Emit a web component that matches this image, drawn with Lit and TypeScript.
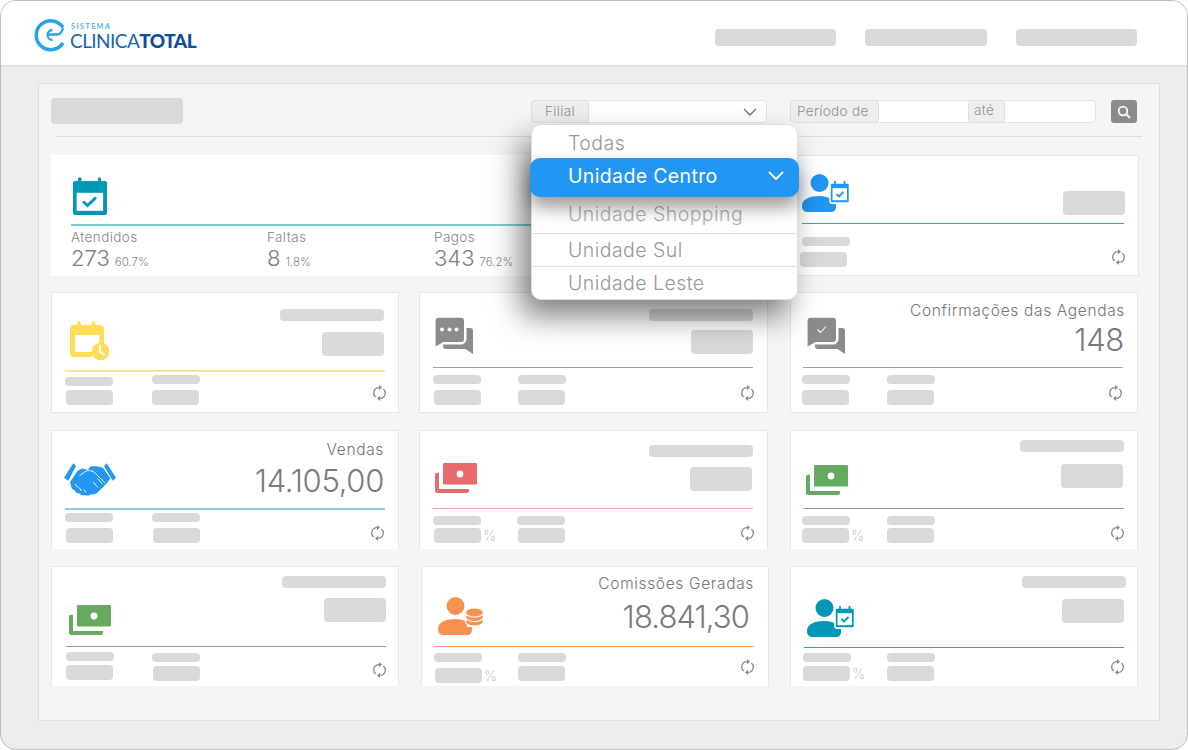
import { LitElement, html, css, svg } from "lit";
import { customElement } from "lit/decorators.js";

const TEAL = "#0097b7", BLUE = "#2196f3", GREEN = "#66a961", RED = "#e96a6c", ORANGE = "#f79250", GREY = "#8d8a8a", YELLOW = "#ffdd57";

const calendarMini = (c: string) => svg`
  <rect x="28" y="9" width="19.5" height="20" rx="1.5" fill="${c}" stroke="#fff" stroke-width="1.6"/>
  <path d="M33 7.6v3M42.500 7.600v3" stroke="${c}" stroke-width="1.800" stroke-linecap="round"/>
  <rect x="30.500" y="14.200" width="14.500" height="12" fill="#fff"/>
  <path d="M34.500 20l2.500 2.500 4.500-4.500" fill="none" stroke="${c}" stroke-width="1.900"/>`;

const person = (c: string) => svg`
  <circle cx="17.500" cy="9" r="9" fill="${c}"/>
  <path d="M0 32c0-7 8-10 17-10 5 0 9 1 12 3v5h5v3c0 3-2 5-5 5H6c-3.500 0-6-2-6-6z" fill="${c}"/>`;

const icons: Record<string, any> = {
  calCheck: html`<svg width="34" height="38" viewBox="0 0 34 38">
    <path d="M6 0.500h1.500a1 1 0 0 1 1 1V4H25V1.500a1 1 0 0 1 1-1h1a1 1 0 0 1 1 1V4h4a2 2 0 0 1 2 2v30a2 2 0 0 1-2 2H2a2 2 0 0 1-2-2V6a2 2 0 0 1 2-2h3V1.500a1 1 0 0 1 1-1z" fill="${TEAL}"/>
    <rect x="3.600" y="15.800" width="26.500" height="18" fill="#fff"/>
    <path d="M10 24.500l4.500 4 8.500-8" fill="none" stroke="${TEAL}" stroke-width="3"/></svg>`,
  calClock: html`<svg width="40" height="40" viewBox="0 0 40 40">
    <path d="M9 0a1.800 1.800 0 0 1 1.800 1.800V4h11V1.800a1.800 1.800 0 0 1 3.600 0V4H30a4 4 0 0 1 4 4v16H29.500V14H5v17h17v5H4a4 4 0 0 1-4-4V8a4 4 0 0 1 4-4h3.200V1.800A1.800 1.800 0 0 1 9 0z" fill="${YELLOW}"/>
    <circle cx="30.500" cy="30.500" r="8.800" fill="${YELLOW}"/>
    <path d="M30 24.500v6.500l4 2.500" fill="none" stroke="#fff" stroke-width="1.800" stroke-linecap="round"/></svg>`,
  chatDots: html`<svg width="38" height="37" viewBox="0 0 38 37">
    <path d="M3.600.700H26a3 3 0 0 1 3 3V22a3 3 0 0 1-3 3H8.500L.6 29.500V3.700a3 3 0 0 1 3-3z" fill="${GREY}"/>
    <path d="M31.500 11H35a3 3 0 0 1 3 3v23l-7.500-5H11a3 3 0 0 1-3-3v-1.500h18a5.500 5.500 0 0 0 5.500-5.500z" fill="${GREY}"/>
    <circle cx="7" cy="12.500" r="2" fill="#fff"/><circle cx="14.500" cy="12.500" r="2" fill="#fff"/><circle cx="21.500" cy="12.500" r="2" fill="#fff"/></svg>`,
  chatCheck: html`<svg width="38" height="37" viewBox="0 0 38 37">
    <path d="M3.600.700H26a3 3 0 0 1 3 3V22a3 3 0 0 1-3 3H8.500L.6 29.500V3.700a3 3 0 0 1 3-3z" fill="${GREY}"/>
    <path d="M31.500 11H35a3 3 0 0 1 3 3v23l-7.500-5H11a3 3 0 0 1-3-3v-1.500h18a5.500 5.500 0 0 0 5.500-5.500z" fill="${GREY}"/>
    <path d="M10.500 12.500l3 3 5.500-6" fill="none" stroke="#fff" stroke-width="1.100"/></svg>`,
  handshake: html`<svg width="52" height="34" viewBox="0 0 52 34">
    <path d="M9.300 1.300L12 4 4.300 18.700 0 15.700z M42.700 1.300L40 4l8.700 14.700L52 15.700z" fill="${BLUE}"/>
    <path d="M13.500 9L18 6.500 24 8l2-3.300c5-.8 9.500-.2 13.300 1.600L46.500 16.500 42 22 33 31c-2 1.500-4.500 1.800-6 .9-1.500 1.800-4.500 2.200-6.500 1-2 .6-4 0-5-1.400-2.200 .2-4-1-4.500-3-2-.4-3.500-2-4-4.500L6 20z" fill="${BLUE}"/>
    <path d="M15.300 14L21 9.500c3-1.300 6-1.300 9 .5L41 21M29 20l5 5.500M33.500 16.500l5 5.500" fill="none" stroke="#fff" stroke-width=".9"/>
    <path d="M11 22l3 3.500M15 25.500l2.500 3.500M20 27.500l2 3" stroke="#fff" stroke-width="1"/></svg>`,
  money: (c: string) => html`<svg width="42" height="30" viewBox="0 0 42 30">
    <path d="M0 11.700a2 2 0 0 1 2-2h2V26h30v2a2 2 0 0 1-2 2H2a2 2 0 0 1-2-2z" fill="${c}"/>
    <rect x="8" y="0" width="34" height="21.500" rx="1.200" fill="${c}"/>
    <circle cx="25" cy="11" r="3.400" fill="#fff"/></svg>`,
  personCal: (c: string) => html`<svg width="48" height="38" viewBox="0 0 48 38">${person(c)}${calendarMini(c)}</svg>`,
  personCoins: html`<svg width="46" height="38" viewBox="0 0 46 38">${person(ORANGE)}
    <g fill="${ORANGE}" stroke="#fff" stroke-width="1.200">
      <ellipse cx="36.500" cy="24.500" rx="9" ry="4.500"/><ellipse cx="36.500" cy="20" rx="9" ry="4.500"/><ellipse cx="36.500" cy="15.500" rx="9" ry="4.500"/>
    </g></svg>`,
};

const refreshIcon = html`<svg class="refresh-svg" width="13" height="16" viewBox="0 0 13 16">
  <path d="M6 2.600A5.300 5.300 0 0 0 2.700 12" fill="none" stroke="#8a8a8a" stroke-width="1.300"/>
  <path d="M6 0l3 2.600-3 2.600z" fill="#8a8a8a"/>
  <path d="M7 13.400A5.300 5.300 0 0 0 10.300 4" fill="none" stroke="#8a8a8a" stroke-width="1.300"/>
  <path d="M7 16l-3-2.600 3-2.600z" fill="#8a8a8a"/></svg>`;

type Foot = number[];
interface Card {
  w: number; h: number; ml?: number; open?: boolean;
  pl: number; ry: number; lw: number; rh: number; rc: string;
  icon: any; il: number; it: number;
  title?: string; tt?: number; tmr?: number;
  value?: string; vt: number; vmr: number; vls?: number;
  col1: Foot; col2?: Foot; c2x?: number; pct?: boolean; rx: number; rfy: number;
}

const cards: Card[] = [
  { w: 348, h: 121, pl: 14, ry: 78, lw: 320, rh: 2, rc: "#ffe58f", icon: icons.calClock, il: 5, it: 29, tt: 17, tmr: 1, vt: 40, vmr: 1, col1: [7, 0, 20, 1], col2: [5, 0, 20, 0], c2x: 87, rx: 314, rfy: 23 },
  { w: 349, h: 121, pl: 14, ry: 75, lw: 320, rh: 1, rc: "#a3a1a1", icon: icons.chatDots, il: 2, it: 25, tt: 17, tmr: 0, vt: 38, vmr: 0, col1: [8, 0, 23, 1], col2: [8, 0, 23, 0], c2x: 85, rx: 314, rfy: 26 },
  { w: 348, h: 121, pl: 13, ry: 75, lw: 320, rh: 1, rc: "#a3a1a1", icon: icons.chatCheck, il: 4, it: 25, title: "Confirmações das Agendas", tt: 9, tmr: -2, value: "148", vt: 28, vmr: -1, col1: [8, -1, 23, -1], col2: [8, 0, 23, 0], c2x: 84, rx: 312, rfy: 26 },
  { w: 348, h: 119, open: true, pl: 14, ry: 78, lw: 320, rh: 2, rc: "#90caf9", icon: icons.handshake, il: -1, it: 32, title: "Vendas", tt: 10, tmr: 1, value: "14.105,00", vt: 31, vmr: 1, col1: [5, 0, 20, 1], col2: [5, 0, 20, 1], c2x: 87, rx: 312, rfy: 25 },
  { w: 349, h: 119, open: true, pl: 14, ry: 78, lw: 320, rh: 1, rc: "#f4a3a3", icon: icons.money(RED), il: 2, it: 33, tt: 15, tmr: 0, vt: 37, vmr: 1, col1: [8, 0, 20, 1], col2: [8, 0, 20, 1], c2x: 84, pct: true, rx: 314, rfy: 25 },
  { w: 348, h: 119, open: true, pl: 13, ry: 78, lw: 321, rh: 1, rc: "#74ae6f", icon: icons.money(GREEN), il: 3, it: 35, tt: 10, tmr: 0, vt: 34, vmr: 1, col1: [8, -1, 20, -1], col2: [8, 0, 20, 0], c2x: 84, pct: true, rx: 314, rfy: 25 },
  { w: 348, h: 120, open: true, pl: 15, ry: 80, lw: 320, rh: 1, rc: "#7db878", icon: icons.money(GREEN), il: 3, it: 39, tt: 10, tmr: 0, vt: 32, vmr: 0, col1: [6, 0, 19, 0], col2: [7, 0, 20, 1], c2x: 86, rx: 313, rfy: 24 },
  { w: 348, h: 120, ml: 2, open: true, pl: 13, ry: 80, lw: 320, rh: 1, rc: "#f9a06a", icon: icons.personCoins, il: 4, it: 31, title: "Comissões Geradas", tt: 8, tmr: 0, value: "18.841,30", vt: 31, vmr: 5, vls: -0.9, col1: [7, 0, 22, 1], col2: [7, 0, 20, 0], c2x: 84, pct: true, rx: 313, rfy: 21 },
  { w: 348, h: 120, open: true, pl: 14, ry: 81, lw: 320, rh: 1, rc: "#1ea6c2", icon: icons.personCal(TEAL), il: 3, it: 33, tt: 10, tmr: -2, vt: 33, vmr: 0, col1: [6, -1, 19, -1], col2: [6, 0, 19, 0], c2x: 83, pct: true, rx: 313, rfy: 20 },
];

const topCard: Card = { w: 351, h: 121, pl: 14, ry: 68, lw: 322, rh: 1, rc: "#4099e8", icon: icons.personCal(BLUE), il: 0, it: 19, vt: 36, vmr: -1, col1: [14, 0, 29, -2], rx: 316, rfy: 34 };

const stats = [
  { label: "Atendidos", n: "273", pct: "60.7%", w: 196 },
  { label: "Faltas", n: "8", pct: "1.8%", w: 167 },
  { label: "Pagos", n: "343", pct: "76.2%", w: 160 },
];

const options = ["Todas", "Unidade Centro", "Unidade Shopping", "Unidade Sul", "Unidade Leste"];

@customElement("app-root")
export class AppRoot extends LitElement {
  static styles = css`
    :host { display: block; height: 750px; overflow: hidden; background: #fff; font-family: "Inter", "Noto Sans", sans-serif; color: #8a8a8a; }
    * { box-sizing: border-box; }
    .window { height: 750px; border: 1px solid #bcbcbc; border-radius: 16px; background: #ededed; overflow: hidden; display: flex; flex-direction: column; }
    header { height: 65px; flex: none; background: #fff; border-bottom: 1px solid #dcdcdc; display: flex; align-items: flex-start; padding: 0 50px 0 32px; box-shadow: 0 1px 1px #e4e4e4; }
    .logo { display: flex; align-items: flex-start; gap: 4px; margin-top: 17px; }
    .logo-text { display: flex; flex-direction: column; font-family: "Lato", sans-serif; margin-top: 5px; }
    .sistema { font-size: 7px; line-height: 7px; font-weight: 700; letter-spacing: 1.55px; color: #4db3ea; margin-left: 1px; }
    .brand { font-size: 19px; line-height: 21px; color: #1665b0; letter-spacing: -.55px; font-weight: 400; white-space: nowrap; }
    .brand b { font-weight: 900; color: #0f4d9c; letter-spacing: -.55px; }
    .nav { margin-left: auto; display: flex; gap: 29px; margin-top: 28px; }
    .nav .skel { width: 121.300px; height: 17px; }
    .skel { background: #dbd8d8; border-radius: 4px; flex: none; }
    .panel { position: relative; margin: 17px 27px 28px 37px; flex: 1; background: #f5f5f5; border: 1px solid #dedede; padding: 14px 17px 0 12px; }
    .toolbar { display: flex; align-items: flex-start; height: 26px; }
    .heading { width: 132px; height: 26px; }
    .group { display: flex; height: 23px; margin-top: 2px; background: #fff; border: 1px solid #e4e4e4; border-radius: 4px; }
    .filial { width: 236px; margin-left: 348px; }
    .periodo { width: 306px; margin-left: 23px; }
    .addon { background: #eee; border: 1px solid #dedede; margin: -1px 0; border-radius: 4px; font-size: 13.500px; letter-spacing: .35px; font-weight: 300; line-height: 21px; padding: 0 7px; color: #8f8f8f; flex: none; height: 23px; white-space: nowrap; }
    .addon.first { margin-left: -1px; }
    .filial .addon { width: 58px; text-align: center; padding: 0; }
    .fill { flex: 1; display: flex; justify-content: flex-end; align-items: center; padding-right: 9px; }
    .periodo .addon.de { width: 89px; padding: 0 6px; }
    .periodo .spacer { width: 89px; }
    .periodo .addon.ate { width: 37px; padding: 0 5px; line-height: 19px; }
    .go { width: 26px; height: 23px; margin: 2px 0 0 15px; background: #8d8a8a; border-radius: 3px; display: flex; align-items: center; justify-content: center; }
    .divider { height: 1px; background: #dcdcdc; margin: 12px 0 0 4px; }
    .top { display: flex; gap: 18px; margin-top: 18px; }
    .big { width: 719px; height: 121px; background: #fff; padding-left: 20px; flex: none; }
    .big .ic { height: 69px; padding: 22px 0 0 2px; }
    .big .ic svg { display: block; }
    .big .rl { height: 2px; background: #7fcbd3; }
    .stats { display: flex; margin-top: 3px; }
    .stat-label { font-size: 13.500px; line-height: 16px; color: #858585; font-weight: 300; letter-spacing: .4px; }
    .stat-row { display: flex; align-items: baseline; gap: 5px; line-height: 26px; }
    .stat-n { font-size: 22px; font-weight: 300; color: #7d7d7d; }
    .stat-p { font-size: 11.500px; font-weight: 300; color: #858585; }
    .grid { display: grid; grid-template-columns: 368px 371px 348px; row-gap: 17px; margin-top: 16px; align-items: start; }
    .card { background: #fff; border: 1px solid #e6e6e6; display: flex; flex-direction: column; }
    .card.open { border-bottom: 0; }
    .head { display: flex; justify-content: space-between; align-items: flex-start; flex: none; }
    .head svg { display: block; }
    .meta { display: flex; flex-direction: column; align-items: flex-end; }
    .title-skel { width: 104px; height: 12px; }
    .title-text { font-size: 15.500px; line-height: 20px; font-weight: 300; letter-spacing: .65px; color: #757575; white-space: nowrap; }
    .value-skel { width: 62px; height: 24px; }
    .value-text { font-size: 31px; line-height: 40px; font-weight: 300; color: #7a7a7a; white-space: nowrap; letter-spacing: -.3px; }
    .foot { position: relative; display: flex; flex: none; }
    .col { width: 48px; flex: none; display: flex; flex-direction: column; }
    .bar1 { width: 48px; height: 9px; }
    .bar2row { display: flex; align-items: flex-end; gap: 2px; }
    .bar2 { width: 47px; height: 15px; }
    .pct { font-size: 14px; line-height: 14px; font-weight: 300; color: #c9c9c9; }
    .refresh { margin-left: auto; flex: none; }
    .refresh-svg { display: block; }
    .menu { position: absolute; left: 492px; top: 40px; width: 267px; height: 176px; background: #fff; border: 1px solid #dedede; border-radius: 10px; box-shadow: -10px 16px 30px rgba(0, 0, 0, .5); display: flex; flex-direction: column; font-size: 19.500px; font-weight: 300; color: #989898; }
    .opt { display: flex; align-items: center; padding-left: 36px; flex: none; white-space: nowrap; letter-spacing: .45px; }
    .opt.o0 { height: 33px; padding-top: 3px; }
    .opt.o1 { height: 39px; margin: 0 -2px; padding: 0 0 4px 38px; background: #2196f3; color: #fff; border-radius: 10px; box-shadow: 0 10px 18px rgba(0, 0, 0, .4); font-weight: 400; letter-spacing: .35px; justify-content: space-between; padding-right: 15px; position: relative; }
    .opt.o2 { height: 37px; border-bottom: 1px solid #dedede; color: #b0b0b0; padding-bottom: 2px; }
    .opt.o3 { height: 33px; border-bottom: 1px solid #dedede; }
    .opt.o4 { height: 32px; }
  `;

  private bar(cls: string, y: number, x: number) {
    return html`<div class="skel ${cls}" style="margin-top:${y}px;margin-left:${x}px"></div>`;
  }

  private col(f: Foot, pct: boolean, extra = "") {
    const gap = f[2] - f[0] - 9;
    return html`<div class="col" style="${extra}">
      ${this.bar("bar1", f[0], f[1])}
      <div class="bar2row" style="margin-top:${gap}px;margin-left:${f[3]}px">
        <div class="skel bar2"></div>${pct ? html`<span class="pct">%</span>` : ""}
      </div>
    </div>`;
  }

  private card(c: Card) {
    const titleH = c.title ? 20 : 12;
    const tt = c.tt ?? 0;
    const hasTitle = c.tt !== undefined;
    const valueMargin = hasTitle ? c.vt - tt - titleH : c.vt;
    const footTop = c.rh;
    return html`<article class="card ${c.open ? "open" : ""}"
      style="width:${c.w}px;height:${c.h}px;margin-left:${c.ml ?? 0}px;padding-left:${c.pl - 1}px">
      <div class="head" style="width:${c.lw}px;height:${c.ry - 1}px">
        <div style="margin:${c.it - 1}px 0 0 ${c.il}px">${c.icon}</div>
        <div class="meta" style="margin-top:${hasTitle ? tt - 1 : c.vt - 1}px">
          ${hasTitle
            ? c.title
              ? html`<div class="title-text" style="margin-right:${c.tmr}px">${c.title}</div>`
              : html`<div class="skel title-skel" style="margin-right:${c.tmr}px"></div>`
            : ""}
          ${c.value
            ? html`<div class="value-text" style="margin-top:${valueMargin}px;margin-right:${c.vmr}px;letter-spacing:${c.vls ?? -0.3}px">${c.value}</div>`
            : html`<div class="skel value-skel" style="margin-top:${hasTitle ? valueMargin : 0}px;margin-right:${c.vmr}px"></div>`}
        </div>
      </div>
      <div style="width:${c.lw}px;height:${c.rh}px;background:${c.rc};flex:none"></div>
      <div class="foot" style="width:${c.lw}px">
        ${this.col(c.col1.map((v, i) => (i % 2 === 0 ? v - footTop : v)), !!c.pct)}
        ${c.col2 ? this.col(c.col2.map((v, i) => (i % 2 === 0 ? v - footTop : v)), false, `margin-left:${(c.c2x ?? 0) - 48}px`) : ""}
        <div class="refresh" style="margin-top:${c.rfy - footTop - 8}px;margin-right:${c.lw - c.rx - 6.5}px">${refreshIcon}</div>
      </div>
    </article>`;
  }

  render() {
    return html`<div class="window">
      <header>
        <div class="logo">
          <svg width="33" height="34" viewBox="0 0 33 34" fill="none" stroke="#27a3e6">
            <path d="M30 9.500A14.500 14.500 0 1 0 30 25" stroke-width="3.500"/>
            <path d="M19.500 12a5 5 0 1 0 0 10" stroke-width="2.300"/>
            <path d="M14 16.500h10c3 0 5-2 6-6.500" stroke-width="2.300"/>
          </svg>
          <div class="logo-text">
            <span class="sistema">SISTEMA</span>
            <span class="brand">CLINICA<b>TOTAL</b></span>
          </div>
        </div>
        <div class="nav"><div class="skel"></div><div class="skel"></div><div class="skel"></div></div>
      </header>
      <section class="panel">
        <div class="toolbar">
          <div class="skel heading"></div>
          <div class="group filial">
            <div class="addon first">Filial</div>
            <div class="fill"><svg width="14" height="8" viewBox="0 0 14 8" fill="none" stroke="#777" stroke-width="1.400"><path d="M1 1l6 6 6-6"/></svg></div>
          </div>
          <div class="group periodo">
            <div class="addon first de">Período de</div>
            <div class="spacer"></div>
            <div class="addon ate">até</div>
          </div>
          <div class="go"><svg width="14" height="14" viewBox="0 0 14 14" fill="none" stroke="#fff" stroke-width="1.800"><circle cx="6" cy="6" r="4.300"/><path d="M9.200 9.200L13 13"/></svg></div>
        </div>
        <div class="divider"></div>
        <div class="top">
          <div class="big">
            <div class="ic">${icons.calCheck}</div>
            <div class="rl"></div>
            <div class="stats">
              ${stats.map((s) => html`<div style="width:${s.w}px">
                <div class="stat-label">${s.label}</div>
                <div class="stat-row"><span class="stat-n">${s.n}</span><span class="stat-p">${s.pct}</span></div>
              </div>`)}
            </div>
          </div>
          ${this.card(topCard)}
        </div>
        <div class="grid">${cards.map((c) => this.card(c))}</div>
        <div class="menu">
          ${options.map((o, i) => html`<div class="opt o${i}"><span>${o}</span>${i === 1
            ? html`<svg width="16" height="9" viewBox="0 0 16 9" fill="none" stroke="#fff" stroke-width="1.800"><path d="M1 1l7 7 7-7"/></svg>`
            : ""}</div>`)}
        </div>
      </section>
    </div>`;
  }
}
